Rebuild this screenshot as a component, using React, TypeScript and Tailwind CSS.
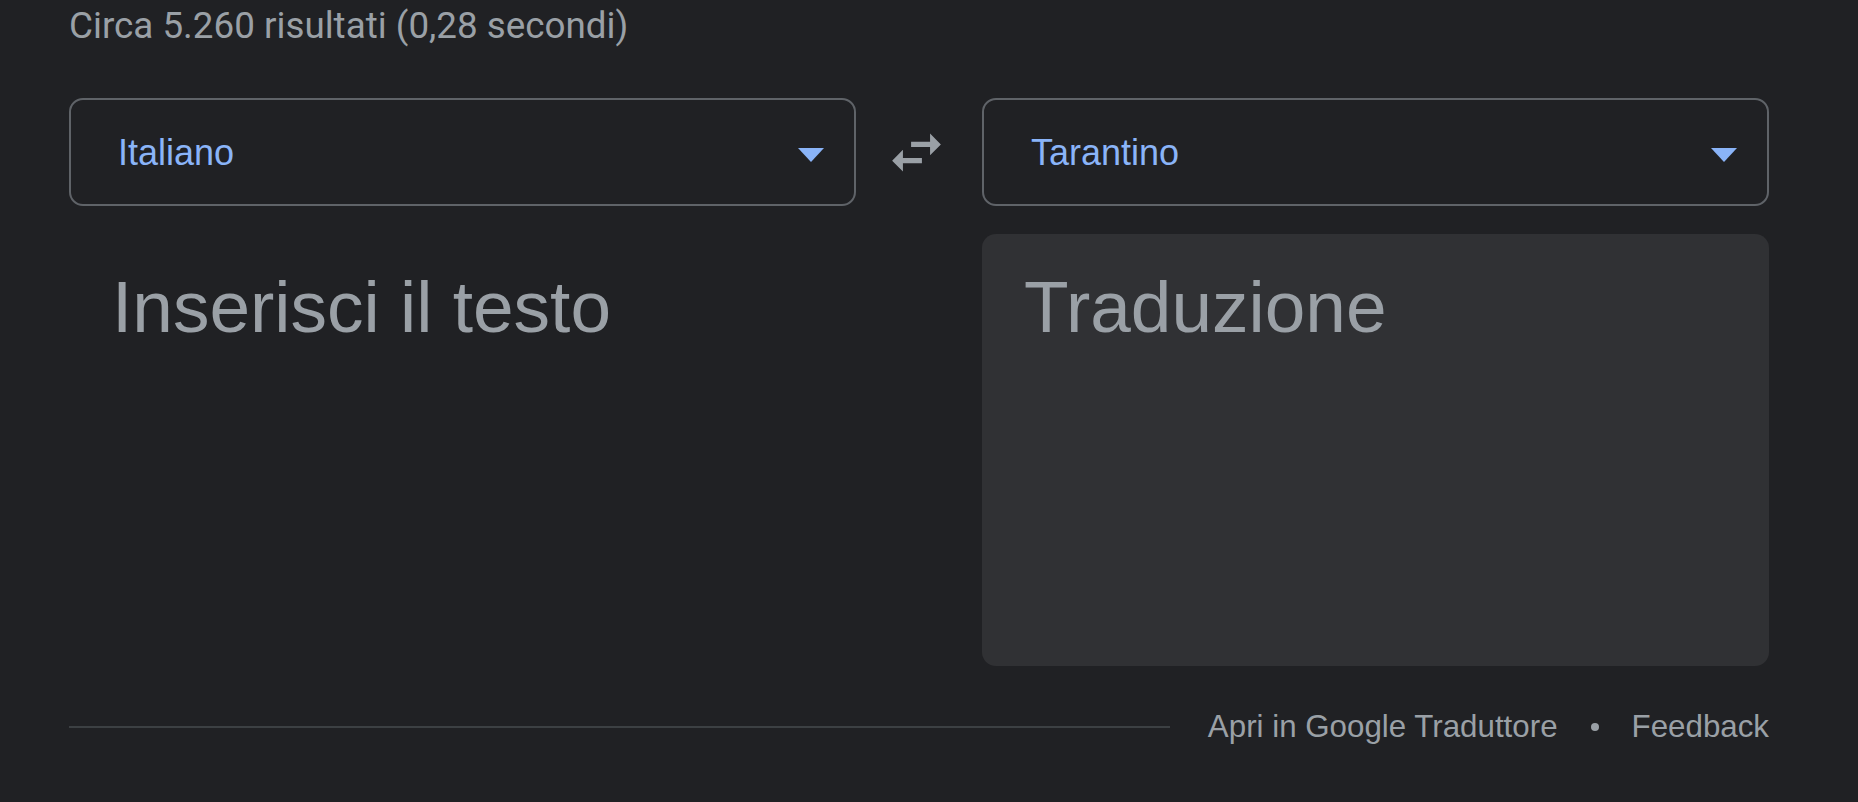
import React from 'react';

const SwapIcon: React.FC = () => (
  <svg className="w-[65px] h-[65px]" viewBox="0 0 24 24" fill="#9aa0a6">
    <path d="M6.99 11L3 15l3.99 4v-3H14v-2H6.99v-3zM21 9l-3.99-4v3H10v2h7.01v3L21 9z" />
  </svg>
);

const LanguageSelect: React.FC<{ label: string }> = ({ label }) => (
  <div className="h-[108px] w-[787px] border-2 border-[#5f6368] rounded-[14px] flex items-center justify-between pl-[47px] pr-[30px]">
    <span className="mt-[1px] text-[36px] leading-[40px] text-[#8ab4f8]">{label}</span>
    <span className="mt-[5px] w-0 h-0 border-l-[13px] border-r-[13px] border-t-[14px] border-l-transparent border-r-transparent border-t-[#8ab4f8]" />
  </div>
);

export default function App() {
  return (
    <div className="min-h-screen bg-[#202124] font-['Liberation_Sans',Arial,sans-serif]">
      <div className="w-[1700px] ml-[69px] pt-[6px]">
        <div className="font-['Roboto',sans-serif] text-[36.8px] leading-[40px] text-[#9aa0a6]">
          Circa 5.260 risultati (0,28 secondi)
        </div>

        <div className="flex mt-[52px]">
          <LanguageSelect label="Italiano" />
          <div className="w-[126px] h-[108px] flex items-center pl-[28px]">
            <SwapIcon />
          </div>
          <LanguageSelect label="Tarantino" />
        </div>

        <div className="flex mt-[28px]">
          <div className="w-[787px] h-[432px] pl-[43px] pt-[33px]">
            <div className="text-[73px] leading-[80px] text-[#9aa0a6]">Inserisci il testo</div>
          </div>
          <div className="w-[126px]" />
          <div className="w-[787px] h-[432px] bg-[#303134] rounded-[14px] pl-[42px] pt-[33px]">
            <div className="text-[73px] leading-[80px] text-[#9aa0a6]">Traduzione</div>
          </div>
        </div>

        <div className="flex items-center mt-[41px] h-[40px]">
          <div className="flex-1 h-[2px] bg-[#3c4043]" />
          <div className="ml-[38px] flex items-center text-[31.3px] leading-[40px] text-[#9aa0a6]">
            <span>Apri in Google Traduttore</span>
            <span className="mx-[33px] w-[8px] h-[8px] rounded-full bg-[#9aa0a6]" />
            <span>Feedback</span>
          </div>
        </div>
      </div>
    </div>
  );
}
